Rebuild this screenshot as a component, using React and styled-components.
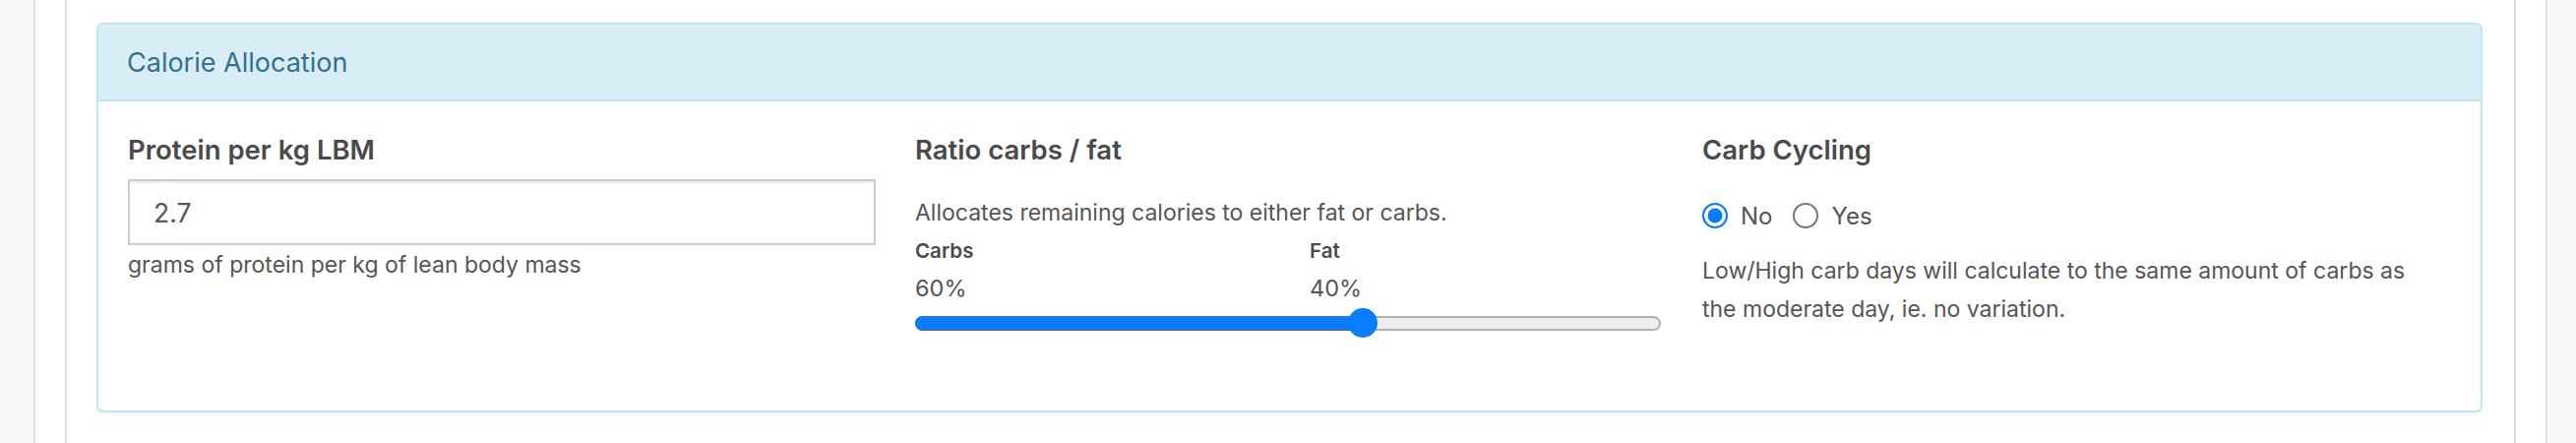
import React from "react";
import styled, { createGlobalStyle } from "styled-components";

const GlobalStyle = createGlobalStyle`
  html, body { margin: 0; padding: 0; background: #f8f8f8; }
  body { font-family: "Inter", "Noto Sans", sans-serif; color: #555; }
  * { box-sizing: border-box; }
`;

const Page = styled.div`
  min-height: 450px;
  padding-left: 34px;
`;

const Sheet = styled.div`
  width: 2555px;
  min-height: 450px;
  background: #fff;
  border-left: 2px solid #dedede;
  border-right: 2px solid #dedede;
  padding: 0 30px;
  display: flex;
`;

const Content = styled.main`
  flex: 1;
  min-height: 450px;
  border-left: 2px solid #dedede;
  border-right: 2px solid #dedede;
  padding: 23px 32px 0 30px;
`;

const Panel = styled.section`
  border: 2px solid #bce8f1;
  border-radius: 7px;
  background: #fff;
  box-shadow: 0 2px 2px rgba(0, 0, 0, 0.05);
  overflow: hidden;
`;

const PanelHeading = styled.header`
  height: 78px;
  display: flex;
  align-items: center;
  padding: 0 29px;
  background: #d9edf7;
  border-bottom: 2px solid #bce8f1;
`;

const PanelTitle = styled.h3`
  margin: 0;
  font-size: 27px;
  font-weight: 400;
  line-height: 37px;
  color: #31708f;
`;

const PanelBody = styled.div`
  display: grid;
  grid-template-columns: repeat(3, 1fr);
  column-gap: 40px;
  padding: 33px 31px 74px 30px;
`;

const Field = styled.div`
  display: flex;
  flex-direction: column;
  align-items: flex-start;
`;

const Label = styled.label`
  font-size: 27.5px;
  font-weight: 600;
  line-height: 33px;
  color: #4a4a4a;
`;

const TextInput = styled.input`
  margin-top: 13px;
  width: 100%;
  height: 67px;
  padding: 0 24px;
  border: 2px solid #cccccc;
  border-radius: 0;
  box-shadow: inset 0 2px 2px rgba(0, 0, 0, 0.075);
  font-family: inherit;
  font-size: 26.5px;
  color: #555;
  background: #fff;
  outline: none;
`;

const HelpText = styled.p`
  margin: ${(p) => p.$mt || 0}px 0 0;
  font-size: 23px;
  line-height: ${(p) => p.$lh || 34}px;
  color: #555;
  max-width: ${(p) => (p.$maxw ? `${p.$maxw}px` : "none")};
`;

const SplitLabels = styled.div`
  margin-top: 9px;
  display: grid;
  grid-template-columns: 401px auto;
  width: 100%;
`;

const SplitCell = styled.div`
  display: flex;
  flex-direction: column;
`;

const SplitName = styled.span`
  font-size: 20.5px;
  font-weight: 600;
  line-height: 26px;
  color: #4a4a4a;
`;

const SplitValue = styled.span`
  margin-top: 7.5px;
  font-size: 23.5px;
  line-height: 34px;
  color: #555;
`;

const Slider = styled.div`
  position: relative;
  margin-top: 3.5px;
  width: 758px;
  height: 30px;
  display: flex;
  align-items: center;
`;

const Track = styled.div`
  position: relative;
  width: 100%;
  height: 15px;
  border: 2px solid #b0b0b0;
  border-radius: 8px;
  background: #eeeeee;
`;

const Fill = styled.div`
  position: absolute;
  left: -2px;
  top: -2px;
  bottom: -2px;
  border-radius: 8px 0 0 8px;
  background: #0d7cfb;
  border-bottom: 2px solid #3a6fb6;
  border-top: 1px solid #2f74d0;
`;

const Thumb = styled.div`
  position: absolute;
  top: 0;
  width: 30px;
  height: 30px;
  margin-left: -15px;
  border-radius: 50%;
  background: #0a7cff;
`;

const RadioGroup = styled.div`
  margin-top: 32px;
  height: 36px;
  display: flex;
  align-items: center;
`;

const RadioOption = styled.label`
  display: inline-flex;
  align-items: center;
  gap: 13px;
  margin-right: 21px;
  font-size: 24px;
  color: #555;
`;

const Radio = styled.input.attrs({ type: "radio" })`
  appearance: none;
  margin: 0;
  width: 26px;
  height: 26px;
  border-radius: 50%;
  border: 2px solid #767676;
  background: #fff;

  &:checked {
    border-color: #0a7cff;
    background: #0a7cff;
    box-shadow: inset 0 0 0 3.5px #fff;
  }
`;

function RangeSlider({ value }) {
  return (
    <Slider>
      <Track>
        <Fill style={{ width: `calc(${value}% + 2px)` }} />
      </Track>
      <Thumb style={{ left: `${value}%` }} />
    </Slider>
  );
}

export default function App() {
  const carbs = 60;
  return (
    <>
      <GlobalStyle />
      <Page>
        <Sheet>
          <Content>
            <Panel>
              <PanelHeading>
                <PanelTitle>Calorie Allocation</PanelTitle>
              </PanelHeading>
              <PanelBody>
                <Field>
                  <Label>Protein per kg LBM</Label>
                  <TextInput defaultValue="2.7" />
                  <HelpText $mt={3}>grams of protein per kg of lean body mass</HelpText>
                </Field>

                <Field>
                  <Label>Ratio carbs / fat</Label>
                  <HelpText $mt={30}>Allocates remaining calories to either fat or carbs.</HelpText>
                  <SplitLabels>
                    <SplitCell>
                      <SplitName>Carbs</SplitName>
                      <SplitValue>{carbs}%</SplitValue>
                    </SplitCell>
                    <SplitCell>
                      <SplitName>Fat</SplitName>
                      <SplitValue>{100 - carbs}%</SplitValue>
                    </SplitCell>
                  </SplitLabels>
                  <RangeSlider value={carbs} />
                </Field>

                <Field>
                  <Label>Carb Cycling</Label>
                  <RadioGroup>
                    <RadioOption>
                      <Radio name="cycling" defaultChecked />
                      No
                    </RadioOption>
                    <RadioOption>
                      <Radio name="cycling" />
                      Yes
                    </RadioOption>
                  </RadioGroup>
                  <HelpText $mt={19} $lh={39} $maxw={728}>
                    Low/High carb days will calculate to the same amount of carbs as the moderate day, ie. no variation.
                  </HelpText>
                </Field>
              </PanelBody>
            </Panel>
          </Content>
        </Sheet>
      </Page>
    </>
  );
}
